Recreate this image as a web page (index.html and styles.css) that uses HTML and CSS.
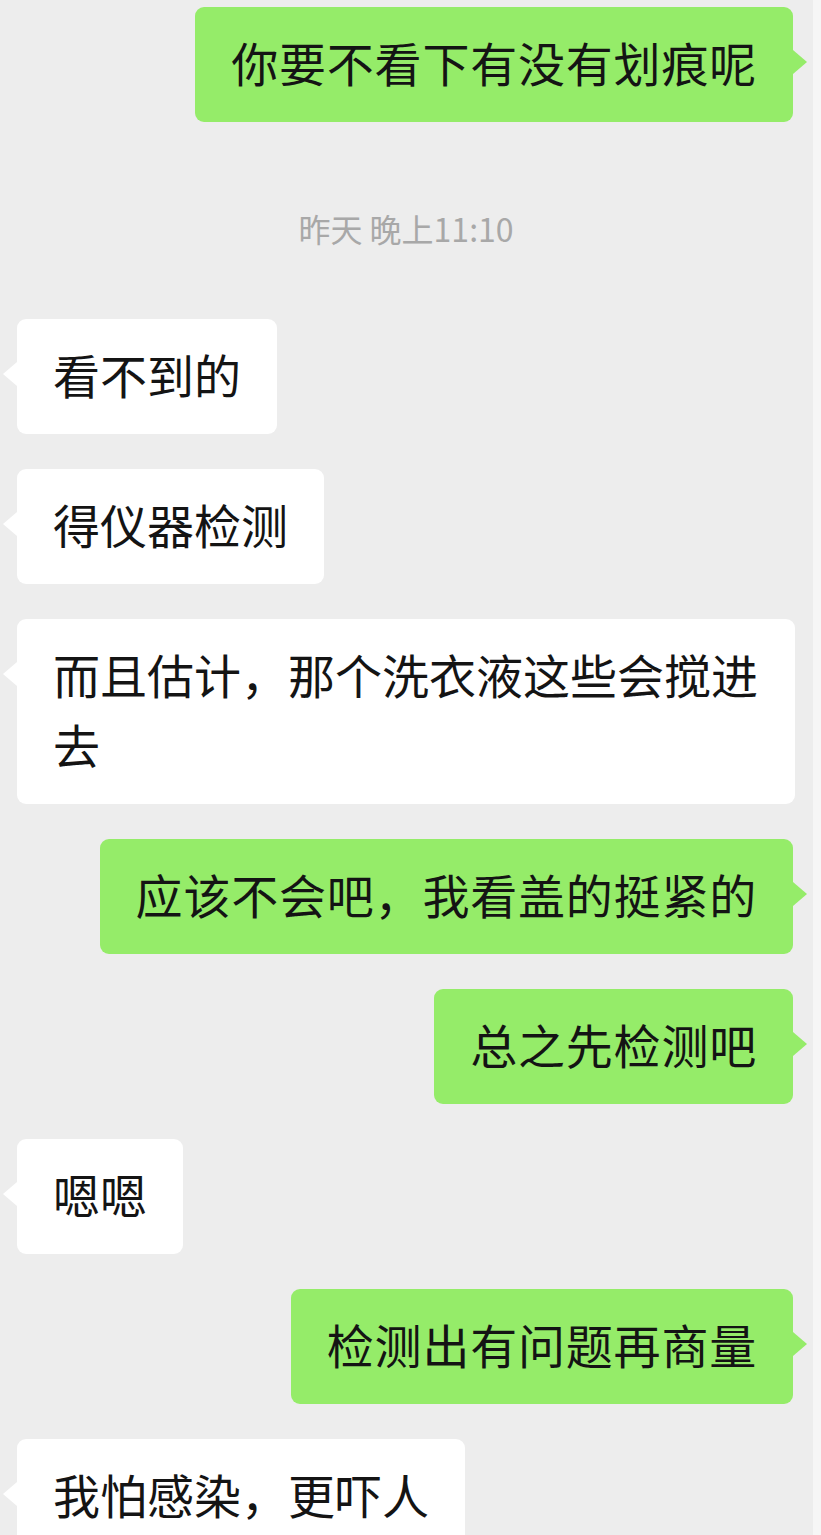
FILE: index.html
```html
<!DOCTYPE html>
<html lang="zh-CN">
<head>
    <meta charset="UTF-8">
    <meta name="viewport" content="width=device-width, initial-scale=1.0">
    <title>聊天记录</title>
    <link rel="stylesheet" href="styles.css">
</head>
<body>
    <div class="chat">
        <div class="row me">
            <div class="bubble">你要不看下有没有划痕呢</div>
        </div>

        <div class="time">昨天 晚上11:10</div>

        <div class="row other">
            <div class="bubble">看不到的</div>
        </div>
        <div class="row other">
            <div class="bubble">得仪器检测</div>
        </div>
        <div class="row other">
            <div class="bubble">而且估计，那个洗衣液这些会搅进去</div>
        </div>
        <div class="row me">
            <div class="bubble">应该不会吧，我看盖的挺紧的</div>
        </div>
        <div class="row me">
            <div class="bubble">总之先检测吧</div>
        </div>
        <div class="row other">
            <div class="bubble">嗯嗯</div>
        </div>
        <div class="row me">
            <div class="bubble">检测出有问题再商量</div>
        </div>
        <div class="row other">
            <div class="bubble">我怕感染，更吓人</div>
        </div>
    </div>
</body>
</html>
```

FILE: styles.css
```css
html, body {
    margin: 0;
    padding: 0;
    height: 100%;
    overflow: hidden;
}

body {
    background-color: #f6f6f6;
    font-family: "Noto Sans CJK SC", "Noto Sans", sans-serif;
    color: #141414;
}

.chat {
    width: 813px;
    min-height: 100%;
    box-sizing: border-box;
    padding: 7px 18px 40px 17px;
    background-color: #ededed;
    display: flex;
    flex-direction: column;
    gap: 35px;
}

.time {
    margin: 51px 0 36px;
    text-align: center;
    font-size: 32px;
    line-height: 40px;
    color: #a8a8a8;
}

.row {
    display: flex;
}

.row.me {
    justify-content: flex-end;
    padding-right: 2px;
}

.bubble {
    position: relative;
    max-width: 706px;
    padding: 20px 36px 25px;
    border-radius: 9px;
    font-size: 47px;
    line-height: 70px;
    background-color: #fff;
}

.me .bubble {
    background-color: #95ec69;
    letter-spacing: 0.8px;
}

/* little tails */
.bubble::after {
    content: "";
    position: absolute;
    top: 43px;
    width: 0;
    height: 0;
    border-top: 12px solid transparent;
    border-bottom: 12px solid transparent;
}

.other .bubble::after {
    left: -14px;
    border-right: 14px solid #fff;
}

.me .bubble::after {
    right: -14px;
    border-left: 14px solid #95ec69;
}
```
